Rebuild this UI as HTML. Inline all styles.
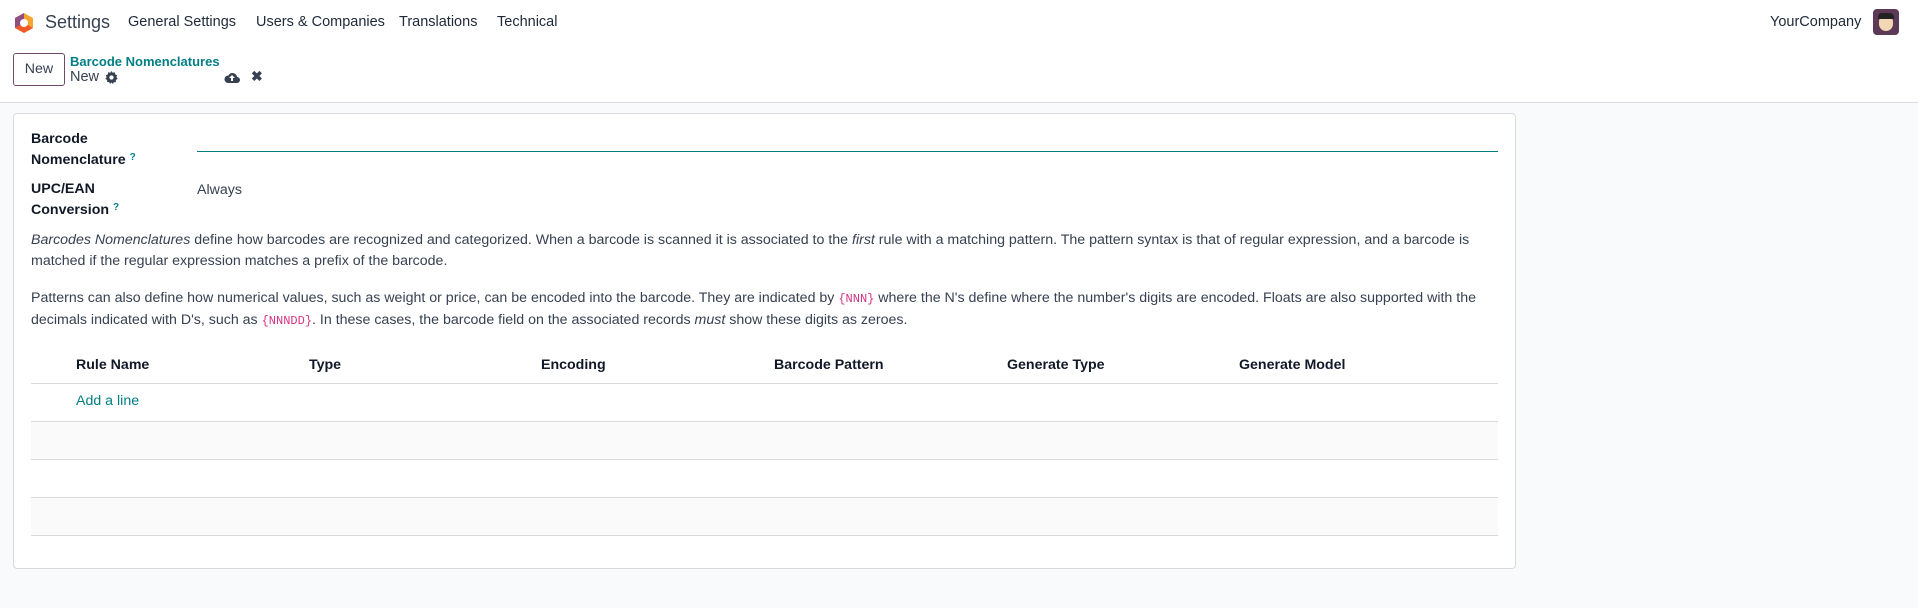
<!DOCTYPE html>
<html><head><meta charset="utf-8"><style>
*{margin:0;padding:0;box-sizing:border-box}
body{width:1918px;height:608px;background:#f9fafb;font-family:"Liberation Sans",sans-serif;color:#374151;position:relative;overflow:hidden;font-size:14.2px}
.a{position:absolute;white-space:nowrap}
#top{position:absolute;left:0;top:0;width:1918px;height:103px;background:#fff;border-bottom:1px solid #d8dadd}
.nav{font-size:14.5px;color:#1f2937;top:14px}
.lbl{font-weight:bold;color:#111827;font-size:14.2px}
.q{color:#017e84;font-size:10px;vertical-align:top;font-weight:bold}
.th{font-weight:bold;color:#111827;top:357px;font-size:14.2px}
.hl{position:absolute;left:31px;width:1467px;height:1px;background:#d8dadd}
code{font-family:"Liberation Mono",monospace;color:#d63384;font-size:12px}
</style></head><body>
<div id="top">
<svg class="a" style="left:13px;top:12px" width="22" height="22" viewBox="0 0 22 22"><polygon points="11,1 20,6 20,16 11,21 2,16 2,6" fill="#f7a530"/><polygon points="11,1 2,6 2,16 11,11" fill="#8f4e7f"/><polygon points="2,16 11,21 20,16 11,11" fill="#f05a28"/><circle cx="11" cy="11" r="4" fill="#fff"/></svg>
<div class="a" style="left:45px;top:12px;font-size:18px;color:#374151">Settings</div>
<div class="a nav" style="left:128px">General Settings</div>
<div class="a nav" style="left:256px">Users &amp; Companies</div>
<div class="a nav" style="left:399px">Translations</div>
<div class="a nav" style="left:497px">Technical</div>
<div class="a nav" style="left:1770px">YourCompany</div>
<div class="a" style="left:1873px;top:9px;width:26px;height:26px;border-radius:4px;background:#5c3a57"><div style="position:absolute;left:6px;top:6px;width:14px;height:16px;border-radius:7px;background:#f3d7b5"></div><div style="position:absolute;left:5px;top:4px;width:16px;height:6px;border-radius:4px 4px 0 0;background:#222"></div></div>
<div class="a" style="left:13px;top:53px;width:52px;height:33px;border:1px solid #714b67;border-radius:3px;font-size:14.2px;color:#374151;text-align:center;line-height:31px">New</div>
<div class="a" style="left:70px;top:54px;font-size:13px;font-weight:bold;color:#017e84">Barcode Nomenclatures</div>
<div class="a" style="left:70px;top:69px;font-size:14.5px;color:#374151">New</div>
<svg class="a" style="left:105px;top:71px" width="13" height="13" viewBox="0 0 16 16"><path d="M8 0l1.5 2.2 2.6-.6.4 2.6 2.5 1-1 2.4 1.6 2.1-2.3 1.4.2 2.6-2.6.1L9.6 16 8 14l-1.6 2-1.3-2.3-2.6-.1.2-2.6L.4 9.7 2 7.6 1 5.2l2.5-1 .4-2.6 2.6.6z" fill="#374151"/><circle cx="8" cy="8" r="2.6" fill="#fff"/></svg>
<svg class="a" style="left:224px;top:71px" width="16" height="12" viewBox="0 0 16 12"><path d="M4 12h9a3 3 0 0 0 0-6 4.5 4.5 0 0 0-8.5-1.5A3.5 3.5 0 0 0 4 12z" fill="#374151"/><path d="M8 4l-3 3h2v3h2V7h2z" fill="#fff"/></svg>
<div class="a" style="left:251px;top:68px;font-size:14px;font-weight:bold;color:#374151">✖</div>
</div>
<div class="a" style="left:13px;top:113px;width:1503px;height:456px;background:#fff;border:1px solid #d8dadd;border-radius:4px"></div>
<div class="a lbl" style="left:31px;top:131px">Barcode</div>
<div class="a lbl" style="left:31px;top:152px">Nomenclature <span class="q">?</span></div>
<div class="a" style="left:197px;top:151px;width:1301px;height:1px;background:#017e84"></div>
<div class="a lbl" style="left:31px;top:181px">UPC/EAN</div>
<div class="a lbl" style="left:31px;top:202px">Conversion <span class="q">?</span></div>
<div class="a" style="left:197px;top:182px">Always</div>
<div class="a" style="left:31px;top:230px;width:1470px;white-space:normal;line-height:21px"><i>Barcodes Nomenclatures</i> define how barcodes are recognized and categorized. When a barcode is scanned it is associated to the <i>first</i> rule with a matching pattern. The pattern syntax is that of regular expression, and a barcode is matched if the regular expression matches a prefix of the barcode.</div>
<div class="a" style="left:31px;top:288px;width:1475px;white-space:normal;line-height:21px">Patterns can also define how numerical values, such as weight or price, can be encoded into the barcode. They are indicated by <code>{NNN}</code> where the N's define where the number's digits are encoded. Floats are also supported with the decimals indicated with D's, such as <code>{NNNDD}</code>. In these cases, the barcode field on the associated records <i>must</i> show these digits as zeroes.</div>
<div class="a th" style="left:76px">Rule Name</div>
<div class="a th" style="left:309px">Type</div>
<div class="a th" style="left:541px">Encoding</div>
<div class="a th" style="left:774px">Barcode Pattern</div>
<div class="a th" style="left:1007px">Generate Type</div>
<div class="a th" style="left:1239px">Generate Model</div>
<div class="hl" style="top:383px"></div>
<div class="a" style="left:76px;top:393px;color:#017e84">Add a line</div>
<div class="a" style="left:31px;top:421px;width:1467px;height:38px;background:#fafafa"></div>
<div class="a" style="left:31px;top:497px;width:1467px;height:38px;background:#fafafa"></div>
<div class="hl" style="top:421px"></div>
<div class="hl" style="top:459px"></div>
<div class="hl" style="top:497px"></div>
<div class="hl" style="top:535px"></div>
</body></html>
